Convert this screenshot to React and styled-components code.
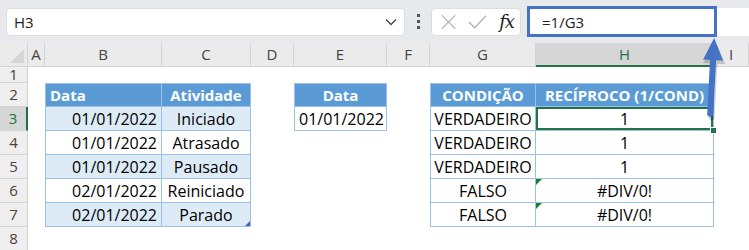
import styled, { createGlobalStyle } from "styled-components";

const GlobalStyle = createGlobalStyle`
  html, body { margin: 0; padding: 0; background: #ffffff; }
  body { width: 749px; height: 250px; overflow: hidden; font-family: "Open Sans", "Liberation Sans", sans-serif; }
`;

const COLS = "28px 17px 117px 89px 43px 93px 43px 106px 178px 1fr";
const LETTERS = ["A", "B", "C", "D", "E", "F", "G", "H", "I"];

const Page = styled.div`
  position: relative;
  width: 749px;
  height: 250px;
  overflow: hidden;
`;

const Toolbar = styled.div`
  display: flex;
  align-items: center;
  height: 43px;
  padding-left: 6px;
  background: #e7e9ec;
  box-sizing: border-box;
`;

const NameBox = styled.div`
  display: flex;
  align-items: center;
  justify-content: space-between;
  width: 399px;
  height: 28px;
  padding: 0 7px 0 7px;
  box-sizing: border-box;
  background: #fff;
  border: 1px solid #dcdde0;
  border-radius: 4px;
  font-size: 15px;
  color: #222;
`;

const Dots = styled.div`
  display: flex;
  flex-direction: column;
  gap: 3px;
  margin: 0 11px 0 12px;
  span {
    width: 3px;
    height: 3px;
    background: #555;
  }
`;

const FxGroup = styled.div`
  display: flex;
  align-items: center;
  gap: 12px;
  width: 90px;
  height: 28px;
  padding: 0 6px 0 9px;
  box-sizing: border-box;
  background: #fff;
  border: 1px solid #dcdde0;
  border-radius: 4px;
`;

const Fx = styled.span`
  font-family: "DejaVu Serif", "Liberation Serif", serif;
  font-style: italic;
  font-size: 18px;
  line-height: 1;
  color: #222;
  letter-spacing: -1px;
`;

const FormulaBar = styled.div`
  position: relative;
  flex: 1;
  display: flex;
  align-items: center;
  height: 28px;
  margin-left: 6px;
  padding-left: 15px;
  background: #fff;
  font-size: 15px;
  color: #222;
`;

const Highlight = styled.div`
  position: absolute;
  left: 0;
  top: -2px;
  width: 190px;
  height: 31px;
  box-sizing: border-box;
  border: 3px solid #4472c4;
`;

const Row = styled.div`
  display: grid;
  grid-template-columns: ${COLS};
  height: ${(p) => p.$h}px;
`;

const ColHead = styled.div`
  display: flex;
  align-items: center;
  justify-content: center;
  box-sizing: border-box;
  line-height: 1;
  background: ${(p) => (p.$active ? "#d6d6d6" : "#ebebeb")};
  color: ${(p) => (p.$active ? "#217346" : "#444")};
  border-right: 1px solid #d4d4d4;
  border-bottom: ${(p) => (p.$active ? "2px solid #217346" : "1px solid #d4d4d4")};
  font-size: 15px;
`;

const Corner = styled.div`
  position: relative;
  background: #ebebeb;
  border-right: 1px solid #d4d4d4;
  border-bottom: 1px solid #d4d4d4;
  box-sizing: border-box;
  &::after {
    content: "";
    position: absolute;
    right: 3px;
    bottom: 3px;
    border-left: 14px solid transparent;
    border-bottom: 14px solid #d6d6d6;
  }
`;

const RowHead = styled.div`
  display: flex;
  align-items: center;
  justify-content: center;
  box-sizing: border-box;
  line-height: 1;
  background: ${(p) => (p.$active ? "#d6d6d6" : "#efefef")};
  color: ${(p) => (p.$active ? "#217346" : "#444")};
  border-right: ${(p) => (p.$active ? "2px solid #217346" : "1px solid #cfcfcf")};
  border-bottom: 1px solid #d4d4d4;
  font-size: 15px;
`;

const BLUE_LINE = "#9bc2e6";

const Cell = styled.div`
  position: relative;
  display: flex;
  align-items: center;
  justify-content: ${(p) => p.$align || "flex-start"};
  padding: 0 4px 0 4px;
  box-sizing: border-box;
  white-space: nowrap;
  line-height: 1;
  font-size: 16px;
  color: #000;
  background: ${(p) =>
    p.$kind === "head" ? "#5b9bd5" : p.$kind === "band" ? "#ddebf7" : "#fff"};
  ${(p) => p.$kind === "head" && "color: #fff; font-weight: 700; font-size: 15px;"}
  ${(p) =>
    p.$kind &&
    `border-right: 1px solid ${BLUE_LINE}; border-bottom: 1px solid ${BLUE_LINE};`}
  ${(p) => p.$first && `border-left: 1px solid ${BLUE_LINE};`}
  ${(p) => p.$kind === "head" && `border-top: 1px solid ${BLUE_LINE};`}
  ${(p) =>
    p.$selected &&
    `box-shadow: inset 0 0 0 2px #217346;
     &::after { content: ""; position: absolute; right: -4px; bottom: -4px; width: 5px; height: 5px;
       background: #217346; border: 1px solid #fff; z-index: 2; }`}
  ${(p) =>
    p.$error &&
    `&::before { content: ""; position: absolute; left: 0; top: 0;
       border-top: 6px solid #1e7e34; border-right: 6px solid transparent; }`}
  ${(p) =>
    p.$resize &&
    `&::after { content: ""; position: absolute; right: 0; bottom: 0;
       border-bottom: 5px solid #4b5dbd; border-left: 5px solid transparent; }`}
`;

const Arrow = styled.svg`
  position: absolute;
  left: 0;
  top: 0;
  pointer-events: none;
`;

const table1 = ["Iniciado", "Atrasado", "Pausado", "Reiniciado", "Parado"];
const table1Dates = ["01/01/2022", "01/01/2022", "01/01/2022", "02/01/2022", "02/01/2022"];
const conds = ["VERDADEIRO", "VERDADEIRO", "VERDADEIRO", "FALSO", "FALSO"];
const recips = ["1", "1", "1", "#DIV/0!", "#DIV/0!"];

function buildRow(n) {
  const c = {};
  if (n === 2) {
    c.B = { t: "Data", kind: "head", first: true };
    c.C = { t: "Atividade", kind: "head", align: "center" };
    c.E = { t: "Data", kind: "head", align: "center", first: true };
    c.G = { t: "CONDIÇÃO", kind: "head", align: "center", first: true };
    c.H = { t: "RECÍPROCO (1/COND)", kind: "head", align: "center" };
  }
  if (n >= 3 && n <= 7) {
    const i = n - 3;
    const k = i % 2 === 0 ? "band" : "plain";
    c.B = { t: table1Dates[i], kind: k, align: "flex-end", first: true };
    c.C = { t: table1[i], kind: k, align: "center", resize: n === 7 };
    c.G = { t: conds[i], kind: "plain", align: "center", first: true };
    c.H = {
      t: recips[i],
      kind: "plain",
      align: "center",
      selected: n === 3,
      error: n >= 6,
    };
  }
  if (n === 3) c.E = { t: "01/01/2022", kind: "plain", first: true };
  return c;
}

const ROWS = [1, 2, 3, 4, 5, 6, 7, 8];

export default function App() {
  return (
    <Page>
      <GlobalStyle />
      <Toolbar>
        <NameBox>
          <span>H3</span>
          <svg width="12" height="8" viewBox="0 0 12 8">
            <path d="M1 1.5 L6 6.5 L11 1.5" fill="none" stroke="#444" strokeWidth="1.3" />
          </svg>
        </NameBox>
        <Dots>
          <span />
          <span />
          <span />
        </Dots>
        <FxGroup>
          <svg width="16" height="16" viewBox="0 0 16 16">
            <path d="M1 1 L15 15 M15 1 L1 15" stroke="#b3b3b3" strokeWidth="1.4" />
          </svg>
          <svg width="20" height="16" viewBox="0 0 20 16">
            <path d="M1 8 L7 14 L19 1.5" fill="none" stroke="#b3b3b3" strokeWidth="1.4" />
          </svg>
          <Fx>fx</Fx>
        </FxGroup>
        <FormulaBar>
          <Highlight />
          =1/G3
        </FormulaBar>
      </Toolbar>

      <Row $h={24}>
        <Corner />
        {LETTERS.map((l) => (
          <ColHead key={l} $active={l === "H"}>
            {l}
          </ColHead>
        ))}
      </Row>

      {ROWS.map((n) => {
        const cells = buildRow(n);
        return (
          <Row key={n} $h={n === 1 ? 16 : 24}>
            <RowHead $active={n === 3}>{n}</RowHead>
            {LETTERS.map((l) => {
              const c = cells[l];
              if (!c) return <Cell key={l} />;
              return (
                <Cell
                  key={l}
                  $kind={c.kind}
                  $align={c.align}
                  $first={c.first}
                  $selected={c.selected}
                  $error={c.error}
                  $resize={c.resize}
                >
                  {c.t}
                </Cell>
              );
            })}
          </Row>
        );
      })}

      <Arrow width="749" height="250">
        <g transform="rotate(3 712 80)">
          <path
            d="M712 40 L723 62 L715 62 L715 117 Q712 121 709 117 L709 62 L701 62 Z"
            fill="#000"
            opacity="0.18"
            transform="translate(1.5 1.5)"
          />
          <path
            d="M712 38 L722 60 L715 60 L715 115 Q712 119 709 115 L709 60 L702 60 Z"
            fill="#4472c4"
          />
        </g>
      </Arrow>
    </Page>
  );
}
